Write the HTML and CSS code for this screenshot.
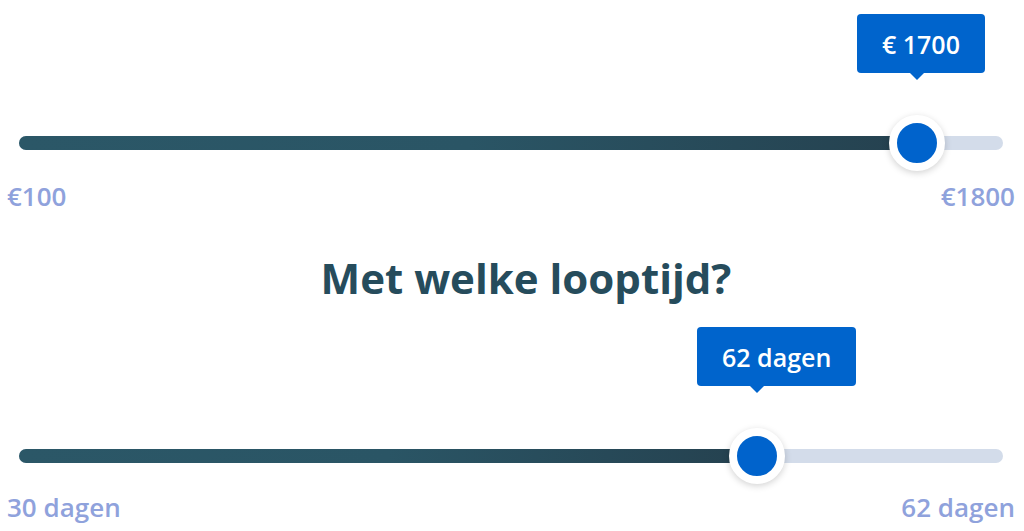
FILE: index.html
```html
<!DOCTYPE html>
<html lang="nl">
<head>
<meta charset="utf-8">
<title>Lening</title>
<link rel="stylesheet" href="styles.css">
</head>
<body>
<main class="page">
  <section class="slider slider-amount">
    <div class="track">
      <div class="fill" style="width: 91.26%"></div>
      <div class="handle" style="left: 91.26%">
        <div class="tooltip">€ 1700</div>
        <div class="thumb"></div>
      </div>
    </div>
    <div class="labels">
      <span>€100</span>
      <span>€1800</span>
    </div>
  </section>

  <h2 class="title">Met welke looptijd?</h2>

  <section class="slider slider-term">
    <div class="track">
      <div class="fill" style="width: 75%"></div>
      <div class="handle" style="left: 75%">
        <div class="tooltip">62 dagen</div>
        <div class="thumb"></div>
      </div>
    </div>
    <div class="labels">
      <span>30 dagen</span>
      <span>62 dagen</span>
    </div>
  </section>
</main>
</body>
</html>
```
FILE: styles.css
```css
* { box-sizing: border-box; }

html, body {
  margin: 0;
  padding: 0;
  background: #ffffff;
}

body {
  font-family: "Open Sans", "Noto Sans", sans-serif;
  width: 1024px;
  height: 531px;
  overflow: hidden;
}

.page {
  display: flex;
  flex-direction: column;
  padding: 0 10px;
}

.slider {
  display: flex;
  flex-direction: column;
}

.slider-amount {
  padding-top: 136px;
}

.slider-term {
  padding-top: 146px;
}

.track {
  position: relative;
  height: 14px;
  margin: 0 11px 0 9px;
  border-radius: 7px;
  background: #d3dcea;
}

.fill {
  height: 100%;
  border-radius: 7px;
  background: linear-gradient(90deg, #2b5767 0%, #2a5565 50%, #25414f 100%);
}

.handle {
  position: absolute;
  top: 50%;
  width: 0;
  height: 0;
}

.thumb {
  position: absolute;
  left: -28px;
  top: -28px;
  width: 56px;
  height: 56px;
  border-radius: 50%;
  background: #0063cc;
  border: 8px solid #ffffff;
  box-shadow: 0 2px 7px rgba(0, 0, 0, 0.18);
}

.tooltip {
  position: absolute;
  left: -60px;
  bottom: 70px;
  height: 59px;
  padding: 0 25px;
  display: flex;
  align-items: center;
  white-space: nowrap;
  background: #0064cc;
  color: #ffffff;
  border-radius: 4px;
  font-size: 25px;
  font-weight: 600;
}

.tooltip::after {
  content: "";
  position: absolute;
  left: 53px;
  top: 100%;
  border-left: 7px solid transparent;
  border-right: 7px solid transparent;
  border-top: 7px solid #0064cc;
}

.labels {
  display: flex;
  justify-content: space-between;
  margin: 29px -1px 0 -3px;
  font-size: 26px;
  line-height: 34px;
  font-weight: 600;
  color: #8fa2dc;
}

.slider-term .labels {
  margin-top: 27px;
}

.title {
  margin: 40px 0 0;
  padding-left: 28px;
  text-align: center;
  font-size: 42px;
  line-height: 50px;
  font-weight: 700;
  color: #264c5c;
}
```
